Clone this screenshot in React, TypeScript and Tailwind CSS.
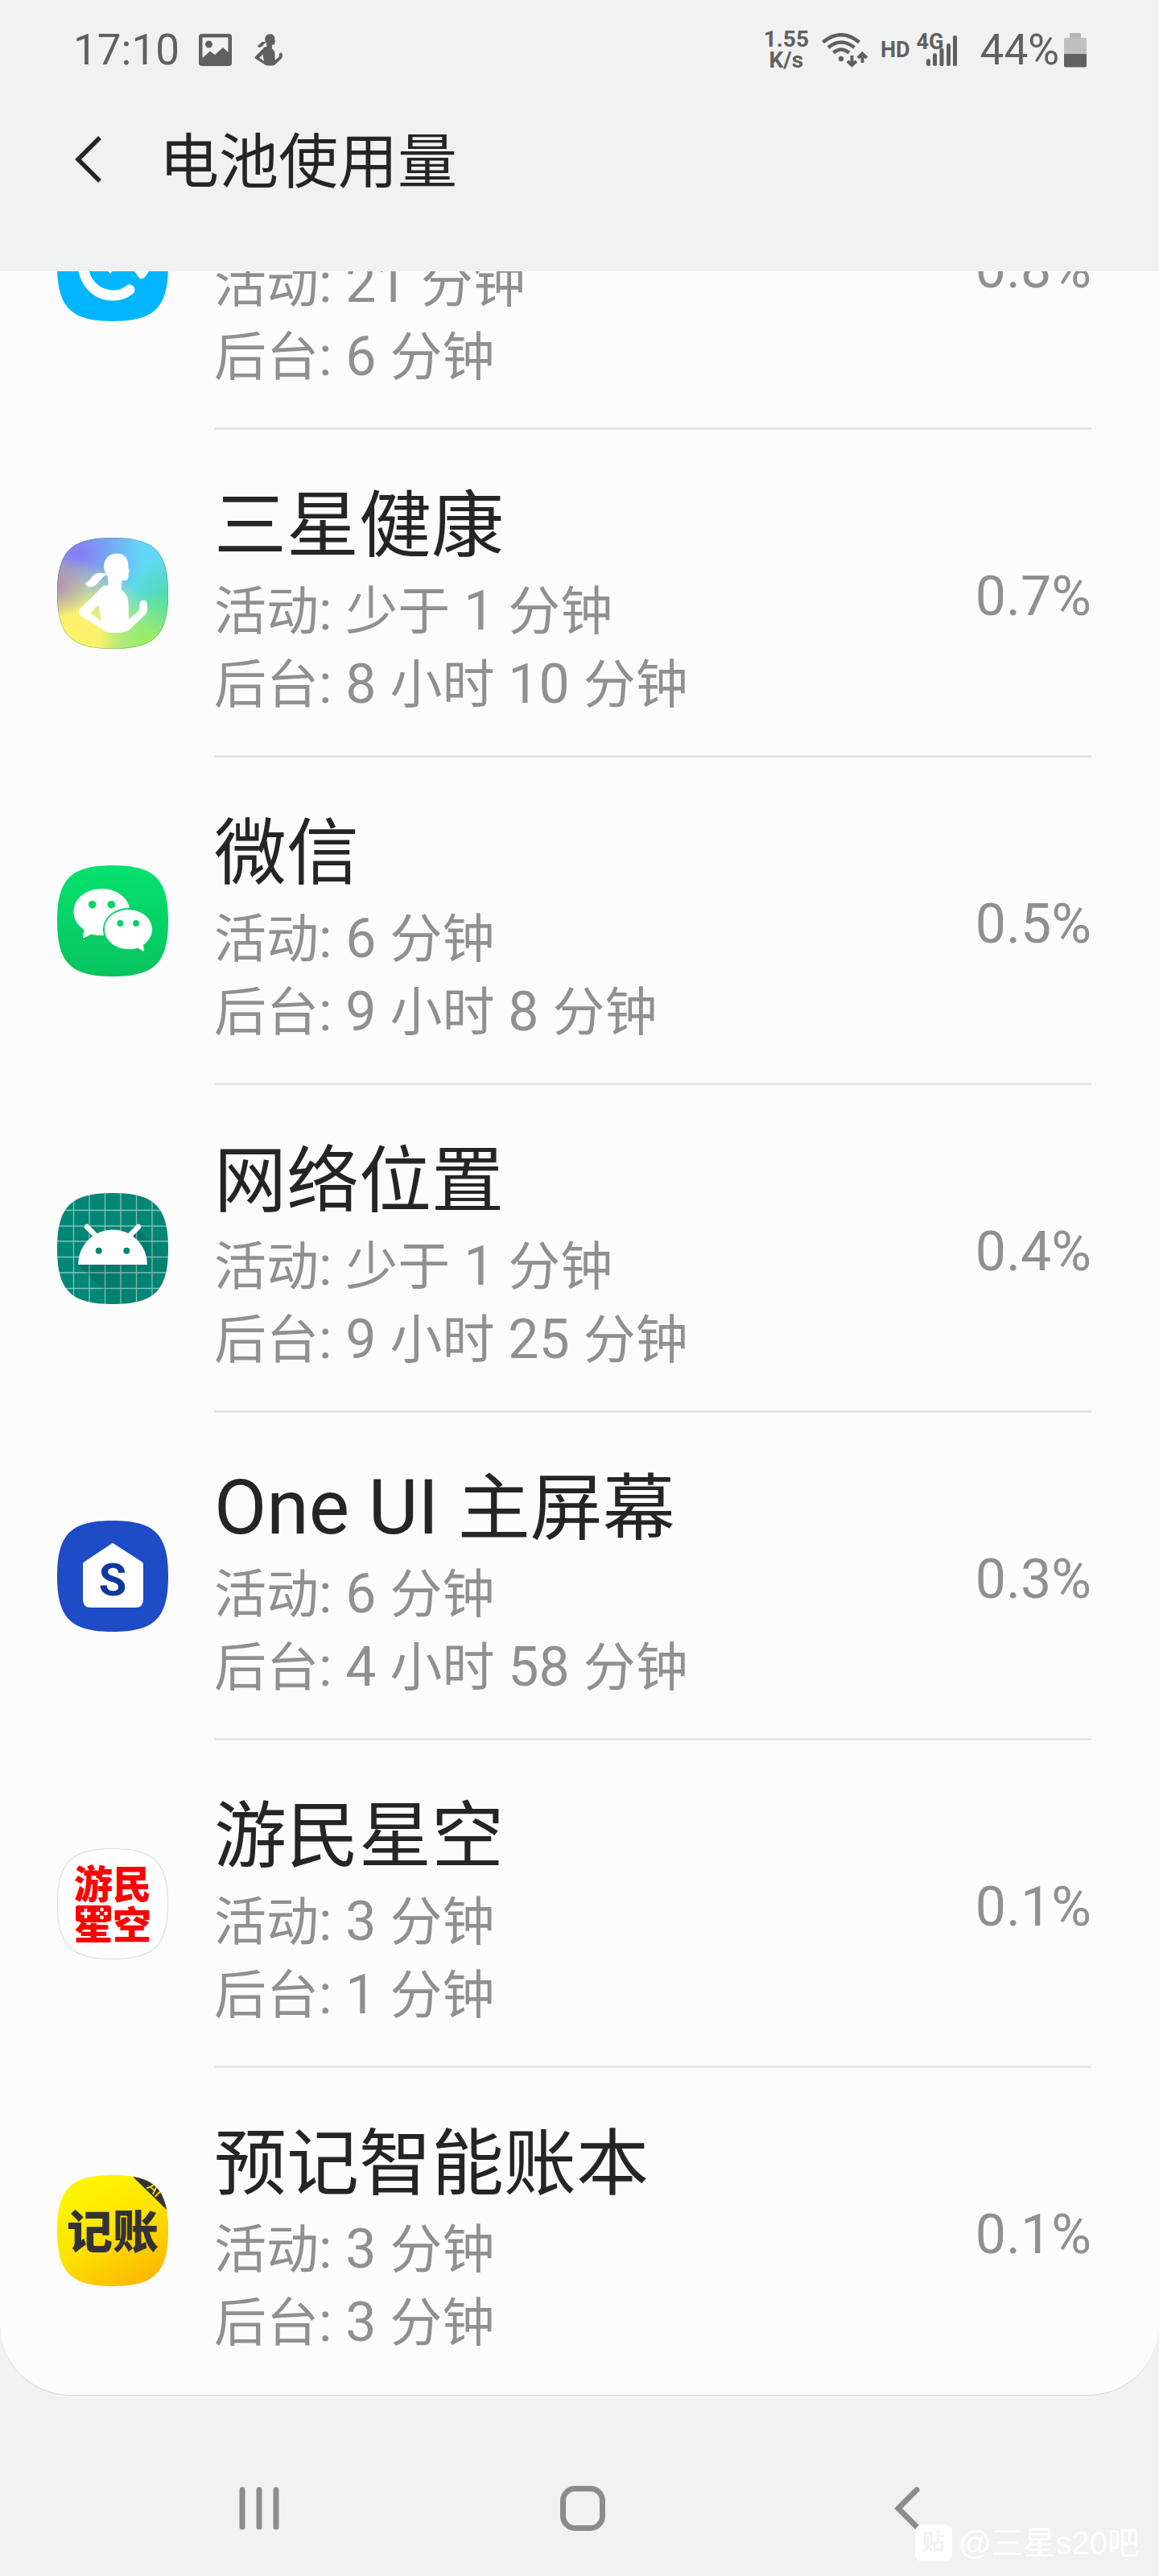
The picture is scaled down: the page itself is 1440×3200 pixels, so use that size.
import { Fragment, type ReactNode } from "react";

interface AppUsage {
  id: string;
  name: string;
  active: string;
  background: string;
  percent: string;
  icon: ReactNode;
}

const SQUIRCLE =
  "M70 1C122 1 139 18 139 70C139 122 122 139 70 139C18 139 1 122 1 70C1 18 18 1 70 1Z";

const RUNNER_BODY =
  "M75 20.500C66 20.500 59 27 59 37C59 41 60.500 44 62.500 46C64 51 65 55 64.500 60C60 60 57 61 54 65L29 90C27.500 92 27.500 95 29 97L56 114C60 118 65 119 71 119C80 119 86 119 91 115L110 97C112 95 113 93 113 89V83C112 77 104 77 103 84C104 88 103 91 101 93L90 102L89.500 80C88 72 85 68 80.500 66L81.500 54H88C89 51 90 48 90 45L91 43L89.500 39C90 27 85 20.500 75 20.500ZM52.500 84.500L56 105L42 94Z";
const RUNNER_HAIR =
  "M62 45.500C55 44 49 45 46 48C42 52 40 56 36 57C37 61 40 63 44 62C51 61 54 52 62 47Z";

function Squircle({ id, children }: { id: string; children: ReactNode }) {
  return (
    <svg viewBox="0 0 140 140" className="size-full" aria-hidden="true">
      <clipPath id={`${id}-clip`}>
        <path d={SQUIRCLE} />
      </clipPath>
      <g clipPath={`url(#${id}-clip)`}>{children}</g>
    </svg>
  );
}

function BrowserIcon() {
  return (
    <Squircle id="browser">
      <rect width="140" height="140" fill="#02b5ff" />
      <path
        d="M33 66C33 90 49 107 71 107C80 107 86 104 91 100"
        fill="none"
        stroke="#fff"
        strokeWidth="13"
        strokeLinecap="round"
      />
      <path d="M58 70H76L67 80Z" fill="#fff" />
      <path d="M92 70H118Q112 85 106 86.500Q104 87 102 84Z" fill="#fff" />
    </Squircle>
  );
}

function HealthIcon() {
  return (
    <Squircle id="health">
      <defs>
        <radialGradient id="health-purple" cx="0.18" cy="0.14" r="0.6">
          <stop offset="0.1" stopColor="#8583f2" />
          <stop offset="1" stopColor="#8583f2" stopOpacity="0" />
        </radialGradient>
        <radialGradient id="health-teal" cx="1" cy="0.6" r="0.45">
          <stop offset="0" stopColor="#4adca6" />
          <stop offset="1" stopColor="#4adca6" stopOpacity="0" />
        </radialGradient>
        <radialGradient id="health-green" cx="0.85" cy="0.98" r="0.5">
          <stop offset="0.1" stopColor="#9eee56" />
          <stop offset="1" stopColor="#9eee56" stopOpacity="0" />
        </radialGradient>
        <radialGradient id="health-yellow" cx="0.15" cy="0.95" r="0.75">
          <stop offset="0.35" stopColor="#fbf26c" />
          <stop offset="1" stopColor="#fbf26c" stopOpacity="0" />
        </radialGradient>
        <radialGradient id="health-rose" cx="0" cy="0.42" r="0.3">
          <stop offset="0" stopColor="#b98fa8" />
          <stop offset="1" stopColor="#b98fa8" stopOpacity="0" />
        </radialGradient>
      </defs>
      <rect width="140" height="140" fill="#62d8f6" />
      <rect width="140" height="140" fill="url(#health-purple)" />
      <rect width="140" height="140" fill="url(#health-teal)" />
      <rect width="140" height="140" fill="url(#health-yellow)" />
      <rect width="140" height="140" fill="url(#health-green)" />
      <rect width="140" height="140" fill="url(#health-rose)" />
      <path d={SQUIRCLE} fill="none" stroke="#000" strokeOpacity="0.3" />
      <path d={RUNNER_BODY} fill="#fff" fillRule="evenodd" />
      <path d={RUNNER_HAIR} fill="#fff" />
    </Squircle>
  );
}

function WeChatIcon() {
  return (
    <Squircle id="wechat">
      <linearGradient id="wechat-bg" x1="0" y1="0" x2="0" y2="1">
        <stop offset="0" stopColor="#05e26f" />
        <stop offset="1" stopColor="#07c35f" />
      </linearGradient>
      <rect width="140" height="140" fill="url(#wechat-bg)" />
      <path
        d="M56.500 30C37 30 21.500 42.500 21.500 58.500C21.500 68 26 75 34.500 81L33 90Q33 92 35 91L43.500 86.500C48 88 52 88 56.500 88C76 88 91.500 75 91.500 58.500C91.500 42.500 76 30 56.500 30Z"
        fill="#fff"
      />
      <circle cx="44.700" cy="49.700" r="4.800" fill="#05d468" />
      <circle cx="68.300" cy="49.700" r="4.800" fill="#05d468" />
      <path
        d="M89.500 56C73 56 60 67 60 80.500C60 94 73 105 89.500 105C94 105 98 104.500 101 103.500L107.500 107.500Q109.500 108 109 106L108 100C114.500 95 119 88.500 119 80.500C119 67 106 56 89.500 56Z"
        fill="#fff"
        stroke="#06cf66"
        strokeWidth="4"
        paintOrder="stroke"
      />
      <circle cx="79.300" cy="73" r="3.900" fill="#05d066" />
      <circle cx="99" cy="73" r="3.900" fill="#05d066" />
    </Squircle>
  );
}

function AndroidIcon() {
  return (
    <Squircle id="android">
      <linearGradient id="android-shadow" x1="0" y1="0" x2="1" y2="1">
        <stop offset="0.2" stopColor="#000" stopOpacity="0.16" />
        <stop offset="0.8" stopColor="#000" stopOpacity="0" />
      </linearGradient>
      <rect width="140" height="140" fill="#048676" />
      <path
        d="M21.500 0V140M41 0V140M60.500 0V140M80 0V140M99.500 0V140M119 0V140M0 22.500H140M0 42H140M0 61H140M0 80.500H140M0 100H140M0 119.500H140"
        stroke="#fff"
        strokeOpacity="0.5"
        strokeWidth="1.300"
      />
      <path d="M27 90L77 140H140V84L105 48Z" fill="url(#android-shadow)" />
      <path d="M27 90A43 43.500 0 0 1 113 90Z" fill="#fff" />
      <path
        d="M38 43L49 54M102 43L91 54"
        stroke="#fff"
        strokeWidth="6.500"
        strokeLinecap="round"
      />
      <circle cx="52.700" cy="72.700" r="4" fill="#048676" />
      <circle cx="87.300" cy="72.700" r="4" fill="#048676" />
    </Squircle>
  );
}

function HomeScreenIcon() {
  return (
    <Squircle id="home">
      <rect width="140" height="140" fill="#1e4bc6" />
      <path
        d="M68 30Q70 28 72 30L106 52Q108 53.500 108 55V99Q108 109 98 109H43Q33 109 33 99V55Q33 53.500 35 52Z"
        fill="#fff"
      />
      <text
        x="70"
        y="94"
        textAnchor="middle"
        className="fill-[#10389c] font-['Roboto',sans-serif] text-[56px] font-bold"
      >
        S
      </text>
    </Squircle>
  );
}

function GamerSkyIcon() {
  return (
    <Squircle id="gamersky">
      <rect width="140" height="140" fill="#fff" />
      <path d={SQUIRCLE} fill="none" stroke="#dcdcdc" strokeWidth="2" />
      <g className="fill-[#fa0202] font-['Noto_Sans_CJK_SC',sans-serif] text-[48px] font-black">
        <text x="70" y="63" textAnchor="middle">
          游民
        </text>
        <text x="70" y="114" textAnchor="middle">
          星空
        </text>
      </g>
      {/* gamepad sits in place of the top of 星 */}
      <rect x="24" y="72" width="44" height="20" rx="3" fill="#fa0202" />
      <path d="M36.500 76V88M30.500 82H42.500" stroke="#fff" strokeWidth="3.500" />
      <g fill="#fff">
        <circle cx="56.500" cy="77" r="2.400" />
        <circle cx="56.500" cy="87" r="2.400" />
        <circle cx="51.500" cy="82" r="2.400" />
        <circle cx="61.500" cy="82" r="2.400" />
      </g>
    </Squircle>
  );
}

function LedgerIcon() {
  return (
    <Squircle id="ledger">
      <linearGradient id="ledger-bg" x1="0.2" y1="0" x2="0.8" y2="1">
        <stop offset="0.1" stopColor="#fff400" />
        <stop offset="0.5" stopColor="#ffe200" />
        <stop offset="1" stopColor="#fbb500" />
      </linearGradient>
      <rect width="140" height="140" fill="url(#ledger-bg)" />
      <path d="M92 0H140V47Z" fill="#333" />
      <text
        x="118"
        y="23"
        textAnchor="middle"
        transform="rotate(45 118 23)"
        className="fill-[#ffe800] font-['Roboto',sans-serif] text-[20px]"
      >
        AI
      </text>
      <text
        x="70"
        y="92"
        textAnchor="middle"
        className="fill-[#333] font-['Noto_Sans_CJK_SC',sans-serif] text-[57px] font-black"
      >
        记账
      </text>
    </Squircle>
  );
}

const apps: AppUsage[] = [
  // Scrolled half out of view, only its usage lines are on screen
  {
    id: "browser",
    name: "",
    active: "21 分钟",
    background: "6 分钟",
    percent: "0.8%",
    icon: <BrowserIcon />,
  },
  {
    id: "health",
    name: "三星健康",
    active: "少于 1 分钟",
    background: "8 小时 10 分钟",
    percent: "0.7%",
    icon: <HealthIcon />,
  },
  {
    id: "wechat",
    name: "微信",
    active: "6 分钟",
    background: "9 小时 8 分钟",
    percent: "0.5%",
    icon: <WeChatIcon />,
  },
  {
    id: "location",
    name: "网络位置",
    active: "少于 1 分钟",
    background: "9 小时 25 分钟",
    percent: "0.4%",
    icon: <AndroidIcon />,
  },
  {
    id: "launcher",
    name: "One UI 主屏幕",
    active: "6 分钟",
    background: "4 小时 58 分钟",
    percent: "0.3%",
    icon: <HomeScreenIcon />,
  },
  {
    id: "gamersky",
    name: "游民星空",
    active: "3 分钟",
    background: "1 分钟",
    percent: "0.1%",
    icon: <GamerSkyIcon />,
  },
  {
    id: "ledger",
    name: "预记智能账本",
    active: "3 分钟",
    background: "3 分钟",
    percent: "0.1%",
    icon: <LedgerIcon />,
  },
];

// Chinese runs are set slightly smaller than the Latin ones around them
function MixedText({ text, cjkClass }: { text: string; cjkClass: string }) {
  return (
    <>
      {text.split(/([\u4e00-\u9fff]+)/).map((part, i) =>
        i % 2 === 1 ? (
          <span key={i} className={cjkClass}>
            {part}
          </span>
        ) : (
          <Fragment key={i}>{part}</Fragment>
        )
      )}
    </>
  );
}

function StatusBar() {
  return (
    <div className="flex h-[124px] items-center justify-between pr-[90px] pl-[91px] text-[#606060]">
      <div className="flex items-center">
        <span className="text-[53px] leading-[64px]">17:10</span>
        <svg viewBox="0 0 41 40" className="ml-6 h-10 w-[41px]" aria-hidden="true">
          <path
            d="M4 0H37Q41 0 41 4V36Q41 40 37 40H4Q0 40 0 36V4Q0 0 4 0ZM4.500 4.500V30L14 21.500L20 26L30 17L36.500 23V4.500ZM12.500 8.500A4.500 4.500 0 1 1 12.500 17.500A4.500 4.500 0 1 1 12.500 8.500Z"
            fill="currentColor"
            fillRule="evenodd"
          />
        </svg>
        <svg viewBox="28 20 86 100" className="ml-7 h-10 w-9" aria-hidden="true">
          <path d={RUNNER_BODY} fill="currentColor" fillRule="evenodd" />
          <path d={RUNNER_HAIR} fill="currentColor" />
        </svg>
      </div>

      <div className="flex items-center">
        <div className="text-center text-[28px] leading-[26px] font-bold">
          <div>1.55</div>
          <div>K/s</div>
        </div>
        <svg viewBox="0 0 57 43" className="ml-4 h-[43px] w-[57px]" aria-hidden="true">
          <g fill="none" stroke="currentColor" strokeWidth="4.500">
            <path d="M1.500 11.500Q24 -7 46.500 11.500" />
            <path d="M8 18Q24 5 40.500 18" />
            <path d="M14.500 24.500Q24 16.500 34 24.500" />
          </g>
          <circle cx="24" cy="32" r="3.200" fill="currentColor" />
          <g fill="none" stroke="currentColor" strokeWidth="4">
            <path d="M37.500 28V39M32 35L37.500 40L43 35" />
            <path d="M50.500 37V26M45 31L50.500 25.500L56 31" />
          </g>
        </svg>
        <span className="ml-4 text-[27px] leading-8 font-bold">HD</span>
        <div className="relative ml-2 h-10 w-[51px]">
          <span className="absolute -top-1.5 left-0 text-[27px] leading-8 font-bold">4G</span>
          <svg viewBox="0 0 51 40" className="size-full" aria-hidden="true">
            <g fill="currentColor">
              <rect x="12" y="31" width="5" height="9" rx="2.500" />
              <rect x="20" y="24" width="5" height="16" rx="2.500" />
              <rect x="28.500" y="18" width="5" height="22" rx="2" />
              <rect x="37" y="12" width="5" height="28" rx="2.500" />
              <rect x="45" y="2" width="5" height="38" rx="2.500" />
            </g>
          </svg>
        </div>
        <span className="ml-7 text-[53px] leading-[64px]">44%</span>
        <svg viewBox="0 0 28 43" className="ml-1.5 h-[43px] w-7" aria-hidden="true">
          <rect x="7" width="14" height="8" rx="1.500" fill="#b6b6b6" />
          <rect y="6" width="28" height="36" rx="2.500" fill="#c0c0c0" />
          <path d="M0 26H28V40Q28 42.500 25.500 42.500H2.500Q0 42.500 0 40Z" fill="currentColor" />
        </svg>
      </div>
    </div>
  );
}

function AppRow({ app }: { app: AppUsage }) {
  return (
    <li className="group flex items-center gap-14 pr-[84px] pl-[70px]">
      <div className="mb-0.5 size-[140px] shrink-0">{app.icon}</div>
      <div className="flex flex-1 items-center justify-between border-b-[3px] border-[#e6e6e6] pt-[58px] pb-[42px] group-last:border-b-0 group-last:pb-11">
        <div>
          <h2 className="h-[122px] text-[95px] leading-[120px] text-[#252525]">
            <MixedText text={app.name} cjkClass="text-[90px]" />
          </h2>
          <p className="h-[91px] text-[68px] leading-[91px] text-[#909090]">
            <MixedText text={`活动: ${app.active}`} cjkClass="text-[65px]" />
          </p>
          <p className="h-[91px] text-[68px] leading-[91px] text-[#909090]">
            <MixedText text={`后台: ${app.background}`} cjkClass="text-[65px]" />
          </p>
        </div>
        <span className="pb-1.5 text-[68px] leading-[80px] text-[#909090]">{app.percent}</span>
      </div>
    </li>
  );
}

export default function App() {
  return (
    <div
      lang="zh-CN"
      className="relative min-h-screen bg-[#f1f1f1] font-['Roboto','Noto_Sans_CJK_SC',sans-serif]"
    >
      <StatusBar />

      <header className="flex h-[213px] items-center gap-[72px] pb-[66px] pl-[92px] text-[#252525]">
        <button type="button" aria-label="返回">
          <svg viewBox="0 0 34 58" className="h-[58px] w-[34px]" aria-hidden="true">
            <path d="M32 2L5 29L32 56" fill="none" stroke="currentColor" strokeWidth="5.500" />
          </svg>
        </button>
        <h1 className="mt-2 text-[74px] leading-[100px]">电池使用量</h1>
      </header>

      {/* App list */}
      <main className="overflow-hidden rounded-b-[88px] border-b border-[#d3d3d3] bg-[#fcfcfc]">
        <ul className="-mt-[210px]">
          {apps.map((app) => (
            <AppRow key={app.id} app={app} />
          ))}
        </ul>
      </main>

      {/* System navigation */}
      <nav className="mt-14 grid h-[168px] grid-cols-3 items-center justify-items-center pr-28 pl-[121px] text-[#8c8c8c]">
        <button type="button" aria-label="最近任务">
          <svg viewBox="0 0 50 54" className="h-[54px] w-[50px]" aria-hidden="true">
            <path
              d="M4 4V50M25 4V50M46 4V50"
              stroke="currentColor"
              strokeWidth="7"
              strokeLinecap="round"
            />
          </svg>
        </button>
        <button type="button" aria-label="主页">
          <svg viewBox="0 0 56 56" className="size-14" aria-hidden="true">
            <rect
              x="3.500"
              y="3.500"
              width="49"
              height="49"
              rx="15"
              fill="none"
              stroke="currentColor"
              strokeWidth="7"
            />
          </svg>
        </button>
        <button type="button" aria-label="后退">
          <svg viewBox="0 0 32 54" className="h-[54px] w-8" aria-hidden="true">
            <path
              d="M28 4L5 27L28 50"
              fill="none"
              stroke="currentColor"
              strokeWidth="7"
              strokeLinecap="round"
            />
          </svg>
        </button>
      </nav>

      {/* Forum watermark */}
      <div className="absolute right-6 bottom-[18px] flex items-center gap-2 text-white">
        <span className="flex size-[46px] items-center justify-center rounded-[9px] bg-white text-[28px] leading-none font-bold text-[#f1f1f1]">
          贴
        </span>
        <span className="font-['Liberation_Sans','Noto_Sans_CJK_SC',sans-serif] text-[40px] leading-[46px]">
          @三星s20吧
        </span>
      </div>
    </div>
  );
}
